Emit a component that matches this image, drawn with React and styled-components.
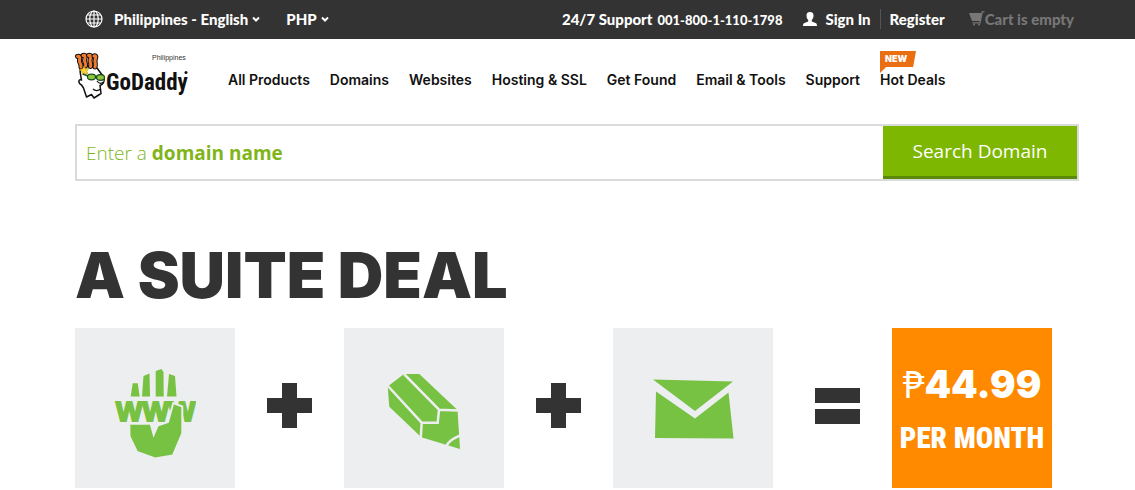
import React from 'react'
import styled, { createGlobalStyle } from 'styled-components'

const GlobalStyle = createGlobalStyle`
  * {
    box-sizing: border-box;
  }
  body {
    margin: 0;
    background: #fff;
    color: #111;
    font-family: Inter, 'Liberation Sans', sans-serif;
  }
  a {
    color: inherit;
    text-decoration: none;
  }
`

const gutter = '0 56px 0 75px'

const TopBar = styled.div`
  display: flex;
  justify-content: space-between;
  align-items: center;
  height: 39px;
  padding: 0 56px 2px 75px;
  background: #333;
  color: #fff;
  font-family: Lato, sans-serif;
  font-size: 15px;
  font-weight: 900;
  line-height: 20px;
  white-space: nowrap;
`

const TopGroup = styled.div`
  display: flex;
  align-items: center;
`

const Picker = styled.button`
  display: flex;
  align-items: center;
  gap: ${props => props.$gap || '4px'};
  margin-left: ${props => props.$indent};
  padding: 0;
  border: 0;
  background: none;
  color: inherit;
  font: inherit;
  cursor: pointer;
`

const PickerLabel = styled.span`
  display: flex;
  align-items: center;
  gap: 4px;
`

const Support = styled.span`
  display: flex;
  align-items: baseline;
  gap: 5px;
  padding-top: 2px;
  margin-right: 21px;
`

const Phone = styled.span`
  font-size: 13px;
`

const TopLink = styled.a`
  display: flex;
  align-items: center;
  gap: ${props => props.$gap || '0'};
  color: ${props => (props.$muted ? '#777' : '#fff')};
`

const SignIn = styled(TopLink)`
  padding-right: 9px;
  margin-right: 9px;
  border-right: 1px solid #555;
`

const Cart = styled(TopLink)`
  margin: 0 5px 0 24px;
`

const Header = styled.header`
  display: flex;
  height: 85px;
  padding: ${gutter};
`

const LogoLink = styled.a`
  margin: 13px 38px 0 0;
`

const Nav = styled.nav`
  display: flex;
  align-items: flex-start;
  gap: 20px;
  padding-top: 31px;
  font-size: 14px;
  font-weight: 600;
  line-height: 20px;
  white-space: nowrap;
`

const HotDeals = styled.a`
  position: relative;
`

const Badge = styled.span`
  position: absolute;
  left: 0;
  bottom: 17px;
  width: 36px;
  height: 22px;
  padding-left: 5px;
  background: #e96f12;
  clip-path: polygon(0 0, 100% 0, 92% 16px, 17% 16px, 0 100%);
  color: #fff;
  font-size: 9px;
  font-weight: 900;
  line-height: 16px;
`

const Main = styled.main`
  padding: ${gutter};
`

const SearchForm = styled.form`
  display: grid;
  grid-template-columns: 1fr 194px;
  height: 57px;
  border: 2px solid #d9dbdb;
  font-family: 'Open Sans', 'Noto Sans', sans-serif;
  font-size: 19px;
`

const SearchInput = styled.input`
  grid-area: 1 / 1;
  min-width: 0;
  padding: 0 10px;
  border: 0;
  outline: 0;
  background: none;
  color: #7db701;
  font: inherit;

  &:not(:placeholder-shown) + label {
    visibility: hidden;
  }
`

const SearchLabel = styled.label`
  grid-area: 1 / 1;
  align-self: center;
  padding-left: 9px;
  color: #7fb519;
  font-weight: 300;
  pointer-events: none;

  b {
    font-weight: 700;
  }
`

const SearchButton = styled.button`
  padding: 0;
  border: 0;
  border-bottom: 3px solid #5b8a0b;
  background: #7db701;
  color: #fff;
  font: inherit;
  cursor: pointer;
`

const Title = styled.h1`
  margin: 58px 0 0;
  color: #333;
  font-size: 63px;
  font-weight: 900;
  line-height: 72px;
`

const Suite = styled.div`
  display: grid;
  grid-template-columns: 160px 11fr 160px 11fr 160px 12fr 160px;
  margin-top: 17px;
  padding-right: 27px;
`

const Tile = styled.a`
  display: flex;
  flex-direction: column;
  align-items: center;
  justify-content: center;
  height: 160px;
  padding-top: ${props => (props.$deal ? '4px' : '2px')};
  background: ${props => (props.$deal ? '#ff8a00' : '#eceeef')};
  color: #fff;
`

const Operator = styled.div`
  display: flex;
  align-items: center;
  justify-content: center;
  padding: 0 0 5px ${props => props.$indent || '0'};
`

const Price = styled.span`
  display: flex;
  align-items: baseline;
  font-size: 38px;
  font-weight: 900;
  line-height: 54px;
`

const Currency = styled.span`
  font-family: 'Noto Sans', 'DejaVu Sans', sans-serif;
  font-weight: 400;
`

const Period = styled.span`
  font-family: 'Liberation Sans Narrow', 'Roboto Condensed', Roboto, sans-serif;
  font-size: 29px;
  font-weight: 900;
  line-height: 54px;
`

const Chevron = () => (
  <svg width="8" height="6" viewBox="0 0 8 6" aria-hidden="true">
    <path d="M1 1.5l3 3 3-3" fill="none" stroke="#fff" strokeWidth="2" />
  </svg>
)

const GlobeIcon = () => (
  <svg width="18" height="18" viewBox="0 0 18 18" aria-hidden="true">
    <g fill="none" stroke="#fff" strokeWidth="1.2">
      <circle cx="9" cy="9" r="8" />
      <ellipse cx="9" cy="9" rx="4.2" ry="8" />
      <path d="M9 1v16M1 9h16M2.2 5h13.6M2.2 13h13.6" />
    </g>
  </svg>
)

const PersonIcon = () => (
  <svg width="14" height="14" viewBox="0 0 14 14" aria-hidden="true">
    <path
      fill="#fff"
      d="M7 0C4.400 0 3.500 1.500 3.500 3.400c0 2 .8 3.600 1.700 4.400v1.800L1.500 11C.4 11.400 0 12 0 14h14c0-2-.4-2.600-1.500-3L8.800 9.600V7.800c.9-.8 1.700-2.400 1.700-4.400C10.500 1.500 9.600 0 7 0z"
    />
  </svg>
)

const CartIcon = () => (
  <svg width="16" height="15" viewBox="0 0 16 15" aria-hidden="true">
    <path fill="#777" d="M0 2h12.500l-1 8H3z" />
    <path d="M15.500.8h-2.300L11 11.800H3.500" fill="none" stroke="#777" strokeWidth="1.300" />
    <circle cx="5" cy="13.500" r="1" fill="#777" />
    <circle cx="10" cy="13.500" r="1" fill="#777" />
  </svg>
)

const Logo = () => (
  <svg width="115" height="52" viewBox="0 0 115 52" role="img" aria-label="GoDaddy Philippines">
    <path
      d="M5 16c0 6 1 9 1.500 12-3-1.500-4 3 0 5l2 3 3 9 5-2.500L19 46l7-4.500-1-8c3-1 5-4 4-8L22 16l-8-2z"
      fill="#fff"
      stroke="#111"
      strokeWidth="1.500"
      strokeLinejoin="round"
    />
    <path d="M18 37c2 2 5 2 8 0M22 29c2 3 5 3 6 1" fill="none" stroke="#111" strokeWidth="1.300" />
    {[
      'M2.500 4.500c4-1 1.500 3 2 5s2 3 1.500 5.500',
      'M8 3.500c4-1 1.500 3 1.500 5s2 3 1 5.500',
      'M13.500 3.500c4-1 1.500 3 1.500 5s1.500 3 .5 6',
      'M19 4c3.500-1 1 3 1 5s1 3 0 6',
    ].map(curl => (
      <g key={curl} fill="none" strokeLinecap="round">
        <path d={curl} stroke="#111" strokeWidth="5" />
        <path d={curl} stroke="#ee7b30" strokeWidth="3" />
      </g>
    ))}
    <path
      d="M9 14l1.500 3 3.500-.5-2.300 2.700L13 22l-3.300-1L7 23v-3.500l-3-2 3.500-.5z"
      fill="#ffd52d"
      stroke="#a77c08"
      strokeWidth=".5"
    />
    <path d="M8 22l5 2M20 24.500h2" stroke="#184d17" strokeWidth="1.500" />
    <ellipse cx="16.500" cy="25" rx="4" ry="2.800" fill="#8cc63f" stroke="#184d17" strokeWidth="1.200" />
    <ellipse cx="25.500" cy="25.500" rx="4" ry="2.800" fill="#8cc63f" stroke="#184d17" strokeWidth="1.200" />
    <text x="77" y="8" fill="#333" fontFamily="Liberation Sans, sans-serif" fontSize="7">
      Philippines
    </text>
    <text
      x="31"
      y="38"
      fill="#111"
      fontFamily="Liberation Sans Narrow, Roboto Condensed, Roboto, sans-serif"
      fontSize="23"
      fontWeight="700"
    >
      GoDaddy
    </text>
    <circle cx="111" cy="20.500" r="1.500" fill="#111" />
  </svg>
)

const HandIcon = () => (
  <svg width="82" height="102" viewBox="0 -10 82 102" role="img" aria-label="Domain">
    <g fill="#77c143">
      <path d="M16.700 28.500l2-13.200h5l2 13.200zM28 28.500l1.500-20.500 6-2.500.5 23zM41.700 28.500V3L47.500 1l2 3 .2 24.500zM53 28.500l2-22.500 6 2 1.500 20.500z" />
      <text
        x="2"
        y="53"
        stroke="#77c143"
        strokeWidth="2"
        fontFamily="Liberation Sans, sans-serif"
        fontSize="28"
        fontWeight="700"
      >
        WWW
      </text>
      <path
        d="M15.300 55.700h21.400l3 11 4-9.200L54 54l5.300-19 9 3.500v27L59 87.500 41 90.500 23 84l-7.500-15.500z"
        stroke="#eceeef"
        strokeWidth="2"
      />
    </g>
  </svg>
)

const PencilIcon = () => (
  <svg width="74" height="84" viewBox="0 -7 74 84" role="img" aria-label="Website builder">
    <path d="M.7 12.500L17 0h15.300L70.500 36 73 75 34.300 63.300l-32-30.600z" fill="#77c143" />
    <path
      d="M0 11l34.700 37.700h16l1.300-13 20 .8M17 0l35 35.700M34.700 48.700L33.700 65M59 73c2-6 7-8 15-12"
      fill="none"
      stroke="#eceeef"
      strokeWidth="2.500"
    />
  </svg>
)

const EnvelopeIcon = () => (
  <svg width="82" height="60" viewBox="0 0 82 60" role="img" aria-label="Email">
    <g fill="#77c143">
      <path d="M1 .5l80 2-38 29.500z" />
      <path d="M4 12.500l39 27 33.500-26 5 46L3 59z" />
    </g>
  </svg>
)

const Plus = () => (
  <svg width="45" height="45" viewBox="0 0 45 45" role="img" aria-label="plus">
    <path d="M15 0h15v15h15v15H30v15H15V30H0V15h15z" fill="#333" />
  </svg>
)

const Equals = () => (
  <svg width="45" height="36" viewBox="0 0 45 36" role="img" aria-label="equals">
    <path d="M0 0h45v15H0zM0 21h45v15H0z" fill="#333" />
  </svg>
)

const links = [
  'All Products',
  'Domains',
  'Websites',
  'Hosting & SSL',
  'Get Found',
  'Email & Tools',
  'Support',
]

const App = () => (
  <>
    <GlobalStyle />
    <TopBar>
      <TopGroup>
        <Picker type="button" $indent="10px" $gap="11px">
          <GlobeIcon />
          <PickerLabel>
            Philippines - English <Chevron />
          </PickerLabel>
        </Picker>
        <Picker type="button" $indent="26px">
          PHP <Chevron />
        </Picker>
      </TopGroup>
      <TopGroup>
        <Support>
          <span>24/7 Support</span>
          <Phone>001-800-1-110-1798</Phone>
        </Support>
        <SignIn href="#signin" $gap="8px">
          <PersonIcon />
          Sign In
        </SignIn>
        <TopLink href="#register">Register</TopLink>
        <Cart href="#cart" $muted>
          <CartIcon />
          Cart is empty
        </Cart>
      </TopGroup>
    </TopBar>
    <Header>
      <LogoLink href="#home">
        <Logo />
      </LogoLink>
      <Nav>
        {links.map(link => (
          <a key={link} href="#nav">
            {link}
          </a>
        ))}
        <HotDeals href="#deals">
          <Badge>NEW</Badge>
          Hot Deals
        </HotDeals>
      </Nav>
    </Header>
    <Main>
      <SearchForm>
        <SearchInput id="domain" type="text" placeholder=" " />
        <SearchLabel htmlFor="domain">
          Enter a <b>domain name</b>
        </SearchLabel>
        <SearchButton type="button">Search Domain</SearchButton>
      </SearchForm>
      <Title>A SUITE DEAL</Title>
      <Suite>
        <Tile href="#domain-name">
          <HandIcon />
        </Tile>
        <Operator>
          <Plus />
        </Operator>
        <Tile href="#website">
          <PencilIcon />
        </Tile>
        <Operator>
          <Plus />
        </Operator>
        <Tile href="#email">
          <EnvelopeIcon />
        </Tile>
        <Operator $indent="10px">
          <Equals />
        </Operator>
        <Tile href="#deal" $deal>
          <Price>
            <Currency>₱</Currency>44.99
          </Price>
          <Period>PER MONTH</Period>
        </Tile>
      </Suite>
    </Main>
  </>
)

export default App
